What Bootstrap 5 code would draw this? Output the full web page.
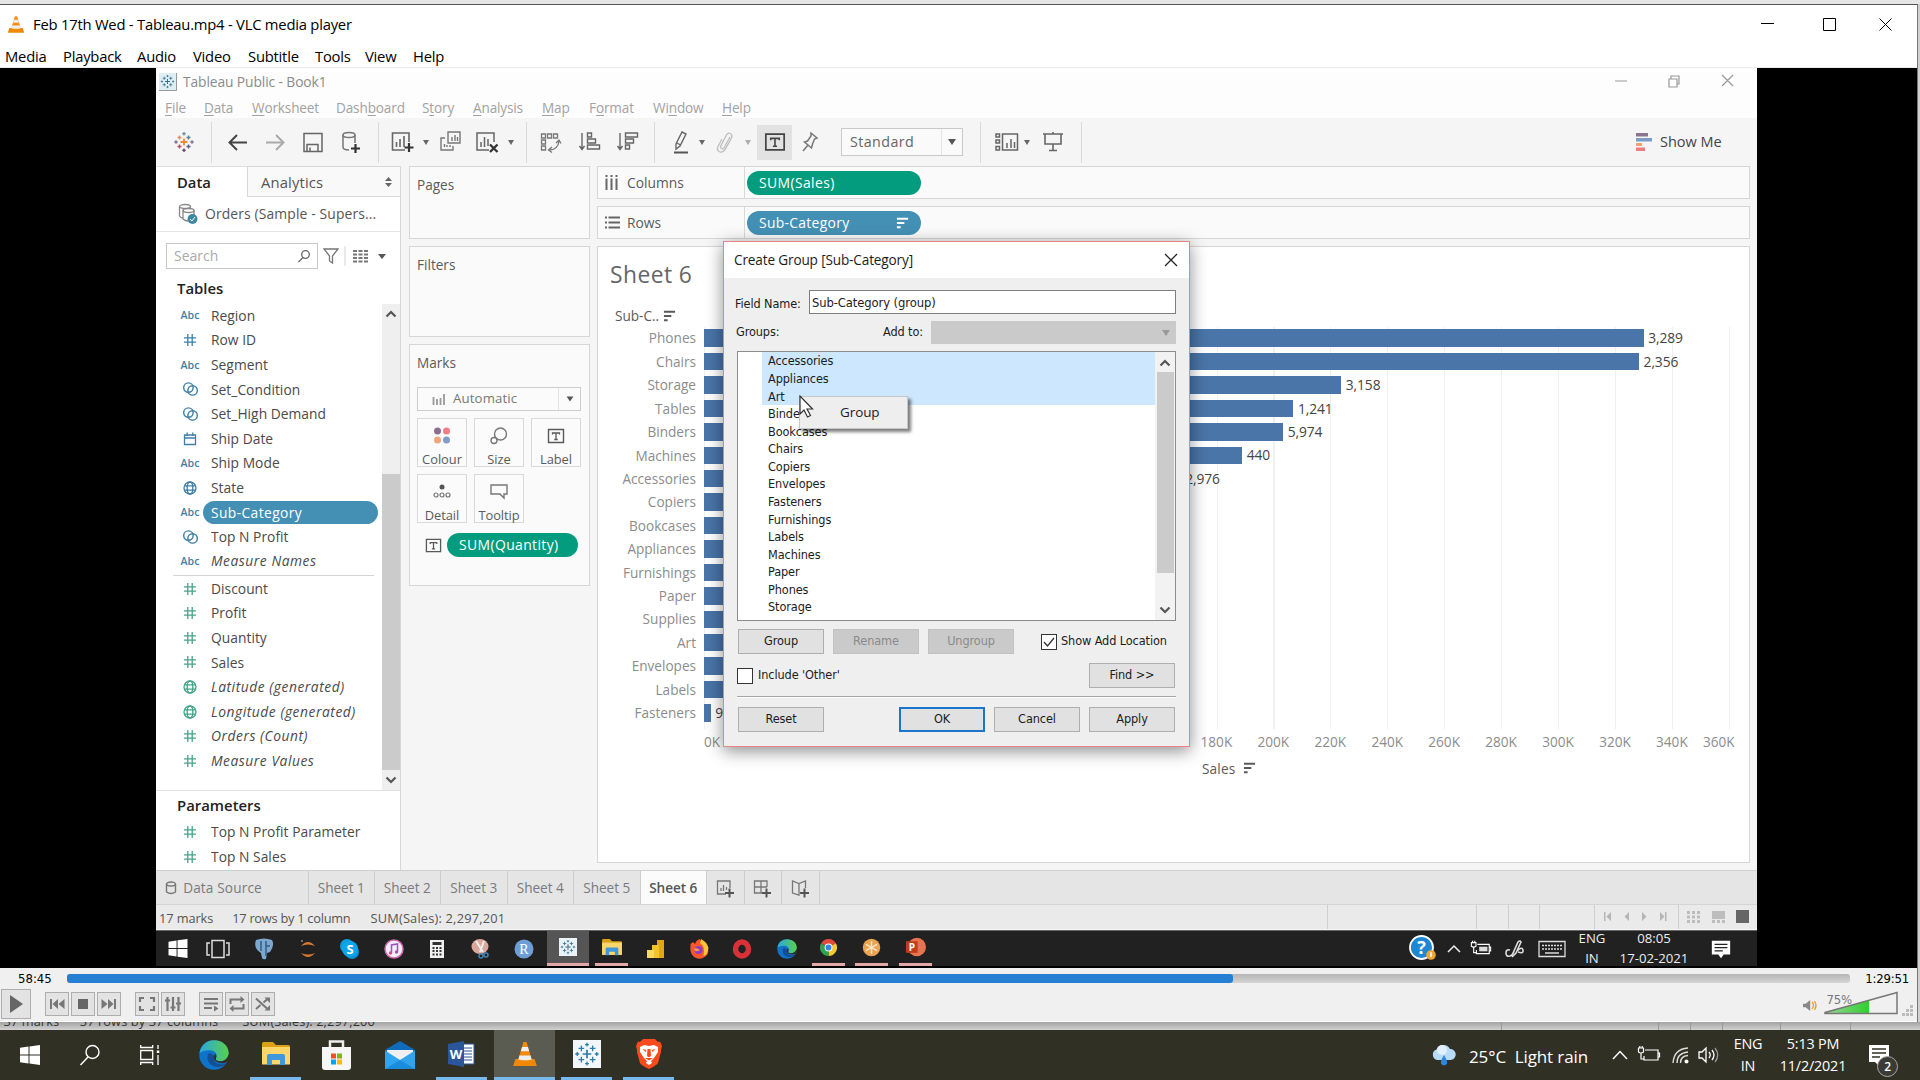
<!DOCTYPE html>
<html lang="en">
<head>
<meta charset="utf-8">
<title>Feb 17th Wed - Tableau.mp4 - VLC media player</title>
<link href="https://cdn.jsdelivr.net/npm/bootstrap@5.3.0/dist/css/bootstrap.min.css" rel="stylesheet">
<style>
html,body{width:1920px;height:1080px;overflow:hidden}
body{font-family:"Open Sans","Noto Sans",sans-serif;font-size:14px;line-height:1;background:#d0d0d0;color:#000}
svg{display:block;flex:none}
.i24{width:24px;height:24px}
.strip-top{height:4px;background:#e6e6e6}
.vlc{width:1918px;height:1018px;background:#fff;border-top:1px solid #555;border-right:1px solid #777}
.vlc-title{height:37px;font-size:14.8px;letter-spacing:-.23px;padding:2px 0 0 7px}
.vlc-menu{height:25px;font-size:14.8px;letter-spacing:-.23px;display:grid;align-items:center;grid-template-columns:58px 74px 56px 55px 67px 50px 48px auto;padding:3px 0 0 5px}
.wbtns{width:180px;display:grid;grid-template-columns:58px 60px auto}
.stage{height:901px;background:#000;border-top:1px solid #ececec;padding-left:156px}
.tab-app{width:1601px;height:862px;background:#f5f5f5;color:#555;position:relative}
.tb-title{height:28px;background:#fdfdfd;color:#8b8b8b;font-size:13.8px;letter-spacing:-.1px;padding-left:3px}
.tb-menu{height:22px;background:#fdfdfd;color:#a2a2a2;font-size:13.6px;letter-spacing:-.15px;display:grid;align-items:center;padding:1px 0 0 9px;grid-template-columns:39px 48px 84px 86px 51px 69px 47px 64px 69px auto}
.tb-menu u{text-underline-offset:2px}
.tools{height:48px;display:grid;align-items:center;padding-left:16px;grid-template-columns:39px 15px 37px 38px 38px 39px 13px 31px 17px 37px 31px 19px 13px 39px 38px 38px 15px 29px 15px 31px 13px 40px 44px 139px 15px 28px 18px 40px 555px auto}
.vsep{width:1px;height:41px;background:#d9d9d9}
.caret{width:0;height:0;border:3px solid transparent;border-top:5px solid #666;border-bottom:0;margin-left:1px}
.caret-lg{width:0;height:0;border:4.5px solid transparent;border-top:6px solid #555;border-bottom:0}
.tbox{width:35px;height:35px;background:#e2e2e2}
.combo{width:122px;height:28px;background:#fafafa;border:1px solid #c9c9c9;font-size:14.3px;letter-spacing:.4px;color:#666;padding-left:8px}
.combo .drop{width:21px;height:26px;border-left:1px solid #e4e4e4}
.work{height:704px}
.side{width:245px;background:#fff;border-right:1px solid #d8d8d8;font-size:14px}
.side-tabs{height:31px}
.side-tabs .t-data{width:91px;padding:1px 0 0 21px;font-weight:600;color:#222;font-size:14.8px;border-top:1px solid #ddd}
.side-tabs .t-an{padding:1px 0 0 13px;background:#f9f9f9;border:1px solid #d8d8d8;border-right:0;font-size:14.8px;letter-spacing:.15px}
.ds{height:35px;border-bottom:1px solid #e4e4e4;padding-left:21px;font-size:13.9px;letter-spacing:.12px}
.searchrow{height:46px;padding:11px 0 9px 10px}
.searchbox{width:152px;border:1px solid #c8c8c8;color:#aaa;padding:0 7px 0 7px}
.hd{font-weight:600;color:#222;font-size:14.9px;padding-left:21px}
.fld{height:24.55px;display:flex;align-items:center;font-size:13.8px;color:#4a4a4a;letter-spacing:.03px}
.fld .ic{width:34px;margin-left:17px;display:flex;justify-content:center;color:#3f7fa5;font-size:10.6px;font-weight:600}
.fld .tx{padding:0 5px 0 4px;white-space:nowrap}
.fld.green .ic{color:#46a487}
.fld.it .tx{font-style:italic;letter-spacing:.55px}
.fld.sel .tx{background:#4490b5;color:#fff;height:23px;line-height:23px;border-radius:12px;width:175px;margin-left:-4px;padding-left:8px;letter-spacing:.4px}
.sbar{width:18px;background:#efefef}
.sbar .thumb{background:#cbcbcb}
.pane{background:#fafafa;border:1px solid #d6d6d6;color:#5a5a5a}
.mid{width:181px;margin-left:8px;gap:7px;font-size:13.6px}
.mid .pane{padding:11px 8px 11px 7px}
.mbox{border:1px solid #d9d9d9;width:50px;height:49px;font-size:12.9px;background:#fbfbfb;padding-top:4px;letter-spacing:-.05px}
.mcombo{height:24px;border:1px solid #cdcdcd;font-size:13.2px;letter-spacing:.15px;color:#777;background:#fbfbfb;padding-left:14px}
.pill{border-radius:12px;height:24px;color:#fff;font-size:13.9px;letter-spacing:.4px;padding:0 12px;background:#039c7e}
.pill.blue{background:#4490b5;letter-spacing:.3px}
.main{width:1153px;margin-left:7px;gap:7px}
.shelf{height:33px;font-size:13.8px}
.shelf .lab{width:147px;border-right:1px solid #d8d8d8;padding-left:7px;gap:9px}
.shelf .pill{width:174px;margin-left:2px}
.sheet{height:617px;background:#fff}
.plotwrap{width:1145px;height:402px;margin-top:1.5px}
.labs{width:98px;text-align:right;font-size:13.6px;color:#8c8c8c}
.labs div,.bars>div{height:23.43px;display:flex;align-items:center;justify-content:flex-end}
.bars{flex:1;margin-left:8px;height:402px;background:repeating-linear-gradient(90deg,#f0f0f0 0 1px,transparent 1px 56.95px)}
.bars>div{justify-content:flex-start;font-size:13.8px;color:#444;letter-spacing:-.1px}
.bars i{display:block;height:17.5px;background:#4975a8;margin-right:4.5px;flex:none}
.axis{font-size:13.6px;color:#8c8c8c;margin-left:106px;height:24px;align-items:center;letter-spacing:0;padding-top:3px}
.axis span{width:56.95px;flex:none;text-align:center}
.dlg{position:absolute;left:567px;top:173px;width:467px;height:506px;background:#efefef;border:1.5px solid #e88484;box-shadow:0 4px 16px rgba(0,0,0,.45);color:#1c1c1c;font-family:"DejaVu Sans Condensed","DejaVu Sans",sans-serif;font-stretch:condensed;font-size:12.6px;letter-spacing:-.1px}
.dlg-h{height:36px;background:#fff;font-family:"Open Sans",sans-serif;font-stretch:normal;font-size:13.6px;padding:0 11px 0 10px;letter-spacing:-.15px}
.dlg-b{padding:12px 13px 0 13px}
.inp{width:367px;height:24px;border:1px solid #7f7f7f;background:#fff;padding-left:2px}
.dcombo{width:245px;height:23px;background:#cacaca;padding-right:6px}
.lst{height:270px;border:1px solid #8c8c8c;background:#fff;margin-top:7px}
.lst .rw{height:17.57px;padding:2px 0 0 6px;display:flex;align-items:center;margin-left:24px}
.lst .rw.on{background:#cde7ff}
.dbtn{width:86px;height:25px;background:#e1e1e1;border:1px solid #aeaeae}
.dbtn.off{background:#cacaca;border-color:#c2c2c2;color:#8b8b8b}
.dbtn.ok{border:2px solid #1d75c9}
.cbx{width:16px;height:16px;border:1px solid #333;background:#fff}
.ctx{position:absolute;left:75px;top:154px;width:109px;height:33px;background:#eee;border:1px solid #c6c6c6;box-shadow:3px 3px 3px rgba(0,0,0,.5);padding-left:40px;font-family:"Open Sans",sans-serif;font-stretch:normal;font-size:13.5px}
.cur{position:absolute;left:75px;top:153px}
.stabs{height:35px;background:#e5e5e5;border-top:1px solid #cfcfcf;border-bottom:1px solid #d4d4d4;font-size:13.6px;color:#7a7a7a}
.stabs>div{border-right:1px solid #cdcdcd;display:flex;align-items:center;justify-content:center;height:33px;letter-spacing:-.05px;padding-top:1px}
.w67{width:66.5px}.w37{width:37.5px}
.stat{height:24px;background:#eaeaea;font-size:12.8px;color:#555;padding-left:3px;letter-spacing:-.1px}
.stat .txt{padding-top:2px}
.stat .cell{border-left:1px solid #cfcfcf;height:24px}
.mini{width:1601px;height:36px;background:#212121;color:#eee;display:grid;align-items:center;padding-left:8px;grid-template-columns:42px 46px 44px 42px 44px 43px 44px 43px 35px 48px 48px 44px 43px 43px 39px 43px 44px 510px 33px 28px 32px 36px 37px 42px 89px auto;font-size:13.2px;border-top:1px solid #666}
.mini .run{width:33px;height:35px;border-bottom:3px solid #e3a8a8;display:flex;align-items:center;justify-content:center}
.mini .act{width:42px;background:#555}
.two{display:flex;flex-direction:column;align-items:center;gap:6px;white-space:nowrap}
.ctl{height:53px;background:#f0f0f0;font-family:"DejaVu Sans Condensed",sans-serif;font-stretch:condensed;font-size:13px;letter-spacing:-.2px}
.seek{height:9px;width:1783px;flex:none;border-radius:3px;background:linear-gradient(#b5b5b5,#d5d5d5)}
.seek i{display:block;height:9px;border-radius:3px;background:#2580d3}
.vb{width:24px;height:24px;border:1px solid #adadad;background:#e3e3e3;margin-right:2px}
.vb.big{width:30px;height:30px;margin-right:14px}
.under{height:8px;background:linear-gradient(#a2a2a2,#d2d2d2);overflow:hidden;padding-right:12px}
.under .cut{font-size:12.8px;color:#333;line-height:8px;margin-top:-5px;white-space:pre;letter-spacing:.1px}
.under i{height:8px;border-left:1px solid #999}
.task{height:50px;background:#303025;color:#fff;display:grid;align-items:center;padding-left:4px;grid-template-columns:60px 60px 64px 62px 61px 63px 62px 58px 67px 62px 808px 38px 139px 29px 32px 28px 33px 43px 89px auto;font-size:14.4px;letter-spacing:-.2px}
.app{width:51px;height:50px;display:flex;align-items:center;justify-content:center}
.app.r{border-bottom:3px solid #76b9ed}
.app.a{width:61px;background:#5a5b51}
.wx{font-size:17px;white-space:pre;letter-spacing:-.1px;padding-top:2px}
.note{position:relative}
.note b{position:absolute;left:15px;top:13px;width:21px;height:21px;border-radius:50%;background:#3b3b35;border:1px solid #aaa;font-size:12px;font-weight:600;display:flex;align-items:center;justify-content:center}
</style>
<script src="https://cdn.jsdelivr.net/npm/bootstrap@5.3.0/dist/js/bootstrap.bundle.min.js"></script>
</head>
<body class="d-flex flex-column m-0">
<svg width="0" height="0" class="position-absolute">
<defs>
<symbol id="cone" viewBox="0 0 24 24"><path d="M1 23l2.2-6.500h17.600L23 23z" fill="#f08705"/><path d="M10.600 1h2.800L18.500 18c-1 2-12 2-13 0z" fill="#f58a0c"/><path d="M9.300 5.500h5.400l1.200 4H8.100zM6.900 13.300h10.200l1 3.700c-1 1-11.200 1-12.200 0z" fill="#eee"/></symbol>
<symbol id="tabl" viewBox="0 0 24 24"><g fill="none" stroke="currentColor" stroke-width="1.200"><path d="M12 8v8M8 12h8" stroke-width="1.600"/><path d="M12 1.500v3.600M10.200 3.300h3.600M12 19v3.600M10.200 20.800h3.600M3 10.200v3.600M1.200 12h3.600M21 10.200v3.600M19.200 12h3.600M6.800 4.200v5.200M4.200 6.800h5.200M17.200 4.200v5.200M14.600 6.800h5.200M6.800 14.600v5.200M4.200 17.200h5.200M17.200 14.600v5.200M14.600 17.200h5.200"/></g></symbol>
<symbol id="sort" viewBox="0 0 14 12"><path d="M1 1.500h12M1 6h8M1 10.500h4" stroke="currentColor" stroke-width="2.200"/></symbol>
<symbol id="hash" viewBox="0 0 14 14"><path d="M4.800 1v12M9.200 1v12M1 4.800h12M1 9.200h12" stroke="currentColor" stroke-width="1.300"/></symbol>
<symbol id="sets" viewBox="0 0 18 16"><g fill="none" stroke="currentColor" stroke-width="1.500"><circle cx="6.800" cy="6.500" r="5"/><circle cx="11.200" cy="9.500" r="5"/></g></symbol>
<symbol id="globe" viewBox="0 0 14 14"><g fill="none" stroke="currentColor" stroke-width="1.300"><circle cx="7" cy="7" r="6"/><ellipse cx="7" cy="7" rx="2.800" ry="6"/><path d="M1.500 4.800h11M1.500 9.200h11"/></g></symbol>
<symbol id="cal" viewBox="0 0 14 14"><path d="M1.500 3h11v9.500h-11zM1.500 6h11M4.200 .5V4M9.800 .5V4" fill="none" stroke="currentColor" stroke-width="1.300"/></symbol>
<symbol id="tlab" viewBox="0 0 18 18"><path d="M1.500 2.500h15v13h-15z" fill="none" stroke="currentColor" stroke-width="1.400"/><path d="M5.500 7.500V6h7v1.500M9 6v6.500M7.300 12.500h3.400" fill="none" stroke="currentColor" stroke-width="1.300"/></symbol>
<symbol id="win" viewBox="0 0 20 20"><path d="M0 2.800l8.500-1.200v7.900H0zM9.500 1.400L20 0v9.500H9.500zM0 10.500h8.500v7.900L0 17.200zM9.500 10.500H20V20L9.500 18.600z" fill="#fff"/></symbol>
<linearGradient id="eg" x2="1" y2="0"><stop stop-color="#2aa6e2"/><stop offset="1" stop-color="#5ad04c"/></linearGradient>
<symbol id="edge" viewBox="0 0 30 30"><circle cx="15" cy="15" r="14.700" fill="#0f73ca"/><path d="M.5 13C2 4.500 8 .3 15 .3c9 0 14.700 6 14.700 13 0 5-4 8-8.700 8-3 0-4.700-1.300-4-3 2-4-1-8-6-8C6 10 2 12 .5 13z" fill="url(#eg)"/><path d="M10 13c-4 5 0 14 9 14 3.500 0 6-1.200 8-3.200-3 1-12 1.500-12-5.500 0-2.500 0-4-5-5.300z" fill="#124f94"/><path d="M14.800 15.500c-1 6 5 8.500 11 7.500l4-2 1-7-1.500 1c-1 4-4.500 6.300-8.300 6.300-3 0-4.700-1.300-4-3 .5-1.300.5-3-.2-4.300z" fill="#303025"/></symbol>
<symbol id="folder" viewBox="0 0 28 24"><path d="M0 1.500Q0 0 1.500 0H11l3 3h12.500Q28 3 28 4.500V22H0z" fill="#dba013"/><path d="M0 5h28v17.500H0z" fill="#fbd66b"/><path d="M5 23v-9q0-2 2-2h14q2 0 2 2v9h-5v-5h-8v5z" fill="#3f98dc"/></symbol>
<symbol id="up" viewBox="0 0 14 14"><path d="M2.500 9.500L7 5l4.500 4.500" fill="none" stroke="currentColor" stroke-width="2.200"/></symbol>
<symbol id="down" viewBox="0 0 14 14"><path d="M2.500 4.500L7 9l4.500-4.500" fill="none" stroke="currentColor" stroke-width="2.200"/></symbol>
<symbol id="bat" viewBox="0 0 24 24"><path d="M8 7h13v10H7v-4M21 10h1.500v4H21M1.500 5v4q2.500 2 5 0V5zM4 10v6h3M2.800 5V3M5.200 5V3" fill="none" stroke="#fff" stroke-width="1.200"/></symbol>
</defs>
</svg>

<div class="strip-top"></div>
<div class="vlc">
  <div class="vlc-title d-flex align-items-center">
    <svg width="18" height="21"><use href="#cone"/></svg><span class="ms-1 ps-1">Feb 17th Wed - Tableau.mp4 - VLC media player</span>
    <div class="wbtns ms-auto align-items-center me-0">
      <svg width="13" height="13" class="ms-4 overflow-visible"><path d="M0 5.500h13" stroke="#000"/></svg>
      <svg width="13" height="13" class="ms-4 ps-1 overflow-visible"><path d="M.5 .5h12v12h-12z" fill="none" stroke="#000"/></svg>
      <svg width="13" height="13" class="ms-4 overflow-visible"><path d="M.5 .5l12 12M12.500 .5l-12 12" stroke="#000"/></svg>
    </div>
  </div>
  <div class="vlc-menu"><span>Media</span><span>Playback</span><span>Audio</span><span>Video</span><span>Subtitle</span><span>Tools</span><span>View</span><span>Help</span></div>

  <div class="stage">
    <div class="tab-app d-flex flex-column">
      <div class="tb-title d-flex align-items-center">
        <svg width="18" height="18" style="color:#2f6f8f"><path d="M0 0h18v18H0z" fill="#dfeef3"/><use href="#tabl" x="1" y="1" width="15" height="15"/><path d="M17.500 0v17.500H0" stroke="#999" fill="none"/></svg>
        <span style="margin-left:6px">Tableau Public - Book1</span>
        <div class="ms-auto d-flex align-items-center pe-1 me-1">
          <svg width="148" height="18"><path d="M14 8h12M68 6h8v8h-8zM70 6V3h8v8h-2M121 2l11 11M132 2l-11 11" fill="none" stroke="#999" stroke-width="1.200"/></svg>
        </div>
      </div>
      <div class="tb-menu"><span><u>F</u>ile</span><span><u>D</u>ata</span><span><u>W</u>orksheet</span><span>Dash<u>b</u>oard</span><span>S<u>t</u>ory</span><span><u>A</u>nalysis</span><span><u>M</u>ap</span><span>F<u>o</u>rmat</span><span>Wi<u>n</u>dow</span><span><u>H</u>elp</span></div>

      <div class="tools">
        <svg class="i24" viewBox="0 0 24 24"><g fill="none" stroke-width="1.400"><path d="M12 8.500v7M8.500 12h7" stroke="#e88b3c" stroke-width="1.800"/><path d="M12 2v3.500M10.300 3.700h3.400" stroke="#6b93a8"/><path d="M12 18.500V22M10.300 20.300h3.400" stroke="#6b4a70"/><path d="M4 10.300v3.400M2.300 12h3.400M20 10.300v3.400M18.300 12h3.400" stroke="#79719b"/><path d="M7.500 5.500v4M5.500 7.500h4" stroke="#e08b60"/><path d="M16.500 5.500v4M14.500 7.500h4" stroke="#56808f"/><path d="M7.500 14.500v4M5.500 16.500h4" stroke="#b64c66"/><path d="M16.500 14.500v4M14.500 16.500h4" stroke="#5d5a90"/></g></svg>
        <div class="vsep"></div>
        <svg class="i24" viewBox="0 0 24 24"><path d="M21 12.500H4M11 5L3.500 12.500 11 20" fill="none" stroke="#444" stroke-width="2"/></svg>
        <svg class="i24" viewBox="0 0 24 24"><path d="M3 12.500h17M13 5l7.500 7.500L13 20" fill="none" stroke="#aaa" stroke-width="2"/></svg>
        <svg class="i24" viewBox="0 0 24 24"><path d="M3 3.500h18v18H3zM6 21.500v-7h11v7M9 17.500v4" fill="none" stroke="#666" stroke-width="1.500"/></svg>
        <svg class="i24" viewBox="0 0 24 24"><path d="M4 5v12q0 3 6 3M16 5v8" fill="none" stroke="#777" stroke-width="1.500"/><ellipse cx="10" cy="5" rx="6" ry="2.500" fill="none" stroke="#777" stroke-width="1.500"/><path d="M16.500 14v9M12 18.500h9" stroke="#333" stroke-width="2.200"/></svg>
        <div class="vsep"></div>
        <svg class="i24" viewBox="0 0 24 24"><path d="M18 12V3H1.500v17H14M5.500 12v5M9 9v8M13 6v11" fill="none" stroke="#666" stroke-width="1.600"/><path d="M18 13v9M13.500 17.500h9" stroke="#333" stroke-width="2.200"/></svg>
        <div class="caret"></div>
        <svg class="i24" viewBox="0 0 24 24"><path d="M9 2h12v11H9zM6 8H2v12h12v-4M13 7v4M16 5v6M18.500 7v4M5.500 14v3M8 15v2M11 15v2" fill="none" stroke="#777" stroke-width="1.400"/></svg>
        <svg class="i24" viewBox="0 0 24 24"><path d="M18 12V3H1v17h12M5 12v5M8.500 7v10M12 9v7" fill="none" stroke="#666" stroke-width="1.500"/><path d="M14 14.500l7.500 7.500M21.500 14.500L14 22" stroke="#333" stroke-width="2.300"/></svg>
        <div class="caret"></div>
        <div class="vsep"></div>
        <svg class="i24" viewBox="0 0 24 24"><path d="M2.500 4h4v4h-4zM8.500 4h4v4h-4zM14.500 4h4v4h-4zM2.500 10h4v4h-4zM2.500 16h4v4h-4zM10 20q9 0 10-9M17 13l3-3 2 3.500M13 17l-3.500 3 3.500 2.500" fill="none" stroke="#777" stroke-width="1.300"/></svg>
        <svg class="i24" viewBox="0 0 24 24"><path d="M4 3v16M1.500 16L4 19.500 6.500 16M9.500 3h4v4h-4zM9.500 9h8v4h-8zM9.500 15h12v4h-12z" fill="none" stroke="#666" stroke-width="1.400"/></svg>
        <svg class="i24" viewBox="0 0 24 24"><path d="M4 3v16M1.500 16L4 19.500 6.500 16M9.500 3h12v4h-12zM9.500 9h8v4h-8zM9.500 15h4v4h-4z" fill="none" stroke="#666" stroke-width="1.400"/></svg>
        <div class="vsep"></div>
        <svg class="i24" viewBox="0 0 24 24"><path d="M13 2l4 2-6 12-4 3v-5zM8 13l3.500 2" fill="none" stroke="#666" stroke-width="1.400"/><path d="M5 22.500h14" stroke="#555" stroke-width="2"/></svg>
        <div class="caret"></div>
        <svg class="i24" viewBox="0 0 24 24"><path d="M17 7l-5.500 10q-1.500 2.500-3 1.500t-.5-3L13 6q2-4 4.500-2.500t.5 5.500l-6 10.500q-3 4-6 2t-.5-6L9 9" fill="none" stroke="#c0c0c0" stroke-width="1.400"/></svg>
        <div class="caret opacity-50"></div>
        <div class="tbox d-flex align-items-center justify-content-center"><svg width="22" height="22" style="color:#444"><use href="#tlab"/></svg></div>
        <svg class="i24" viewBox="0 0 24 24"><path d="M14 3l6 5-2.500 1-2 5-1 4-7-6 3-1 3.500-5zM11 15l-5 6" fill="none" stroke="#777" stroke-width="1.500"/></svg>
        <div class="combo d-flex align-items-center"><span class="me-auto">Standard</span><div class="drop d-flex align-items-center justify-content-center"><div class="caret-lg"></div></div></div>
        <div class="vsep"></div>
        <svg class="i24" viewBox="0 0 24 24"><path d="M7.500 4h15v16h-15zM1 4h3.500v3H1zM1 10h3.500v3H1zM1 16.500h3.500v3.500H1zM12 13v5M16 9v9M19.500 12v6" fill="none" stroke="#666" stroke-width="1.500"/></svg>
        <div class="caret"></div>
        <svg class="i24" viewBox="0 0 24 24"><path d="M2 4h20M4 4v10h16V4M12 14v6M8 20.500h8M12 2v2" fill="none" stroke="#666" stroke-width="1.600"/></svg>
        <div class="vsep"></div>
        <div class="d-flex align-items-center"><svg width="16" height="18"><path d="M0 0h12v3.500H0z" fill="#8a7591"/><path d="M0 5h16v3.500H0z" fill="#7e9cc8"/><path d="M0 10h6v3H0z" fill="#eda274"/><path d="M0 14.500h9V18H0z" fill="#ee7c81"/></svg><span class="ms-2" style="color:#444;font-size:14.5px">Show Me</span></div>
      </div>

      <div class="work d-flex">
        <div class="side d-flex flex-column">
          <div class="side-tabs d-flex"><div class="t-data d-flex align-items-center">Data</div><div class="t-an d-flex align-items-center flex-fill"><span>Analytics</span><svg width="7" height="12" class="ms-auto me-2"><path d="M3.500 1L7 5H0zM3.500 11L7 7H0z" fill="#666"/></svg></div></div>
          <div class="ds d-flex align-items-center"><svg width="22" height="22" viewBox="0 0 22 22"><g fill="none" stroke="#888" stroke-width="1.300"><path d="M2.500 4v9q1 2 3 2M6 7v9q2 2 5 2M17 7v5"/><ellipse cx="8" cy="3.500" rx="5.500" ry="2"/><ellipse cx="11.500" cy="7.500" rx="5.500" ry="2"/></g><circle cx="15.500" cy="16" r="5" fill="#3f85a8"/><path d="M13 16l2 2 3-4" stroke="#fff" fill="none"/></svg><span style="margin-left:6px">Orders (Sample - Supers...</span></div>
          <div class="searchrow d-flex align-items-center">
            <div class="searchbox d-flex align-items-center h-100"><span class="me-auto">Search</span><svg width="12" height="13"><circle cx="7.500" cy="4.500" r="3.800" fill="none" stroke="#666" stroke-width="1.300"/><path d="M5 7.500L.5 12" stroke="#666" stroke-width="1.300"/></svg></div>
            <svg width="16" height="16" style="margin-left:5px"><path d="M1 1h14L9.500 8v7l-3-2V8z" fill="none" stroke="#777" stroke-width="1.300"/></svg>
            <svg width="52" height="22" style="margin-left:5px"><path d="M1 1v20" stroke="#d5d5d5"/><path d="M9 6h15M9 9.500h15M9 13h15M9 16.500h15" stroke="#777" stroke-width="2" stroke-dasharray="4 1.500"/><path d="M34 9h8l-4 5z" fill="#555"/></svg>
          </div>
          <div class="hd" style="height:25.5px;line-height:21px">Tables</div>
          <div class="d-flex" style="height:486.5px"><div id="fields" class="flex-fill"></div>
            <div class="sbar d-flex flex-column align-items-center" style="color:#555"><svg width="14" height="20" class="mb-auto"><use href="#up"/></svg><div class="thumb w-100" style="height:296px"></div><svg width="14" height="20"><use href="#down"/></svg></div></div>
          <div class="flex-fill" style="border-top:1px solid #e0e0e0"><div class="hd d-flex align-items-center" style="height:29px">Parameters</div><div id="params"></div></div>
        </div>

        <div class="mid d-flex flex-column">
          <div class="pane" style="height:73px">Pages</div>
          <div class="pane" style="height:91px">Filters</div>
          <div class="pane d-flex flex-column" style="height:242px">
            <div style="height:31px">Marks</div>
            <div class="mcombo d-flex align-items-center"><svg width="13" height="11"><path d="M1.500 11V3M5 11V5M8.500 11V4M12 11V0" stroke="#999" stroke-width="1.800"/></svg><span class="ms-2 me-auto">Automatic</span><div class="d-flex align-items-center justify-content-center" style="width:22px;height:22px;border-left:1px solid #e3e3e3"><div class="caret-lg" style="transform:scale(.85)"></div></div></div>
            <div class="d-flex justify-content-between text-center" style="margin:7px 0">
              <div class="mbox"><svg width="18" height="18" class="mx-auto mb-1 mt-1"><circle cx="4.500" cy="4" r="3.500" fill="#8a6f91"/><circle cx="13.500" cy="4" r="3.500" fill="#ee7f86"/><circle cx="4.500" cy="13" r="3.500" fill="#f2a57b"/><circle cx="13.500" cy="13" r="3.500" fill="#7f9dc6"/></svg><div class="mt-2">Colour</div></div>
              <div class="mbox"><svg width="18" height="18" class="mx-auto mb-1 mt-1"><circle cx="10.500" cy="7" r="6" fill="none" stroke="#777" stroke-width="1.400"/><circle cx="4" cy="13.500" r="3" fill="#fbfbfb" stroke="#777" stroke-width="1.400"/></svg><div class="mt-2">Size</div></div>
              <div class="mbox"><svg width="18" height="18" class="mx-auto mb-1 mt-1"><use href="#tlab"/></svg><div class="mt-2">Label</div></div>
            </div>
            <div class="d-flex text-center" style="gap:7px">
              <div class="mbox"><svg width="18" height="18" class="mx-auto mb-1 mt-1"><circle cx="9" cy="4" r="2.500" fill="#555"/><g fill="none" stroke="#777" stroke-width="1.200"><circle cx="3" cy="12" r="2"/><circle cx="9" cy="12" r="2"/><circle cx="15" cy="12" r="2"/></g></svg><div class="mt-2">Detail</div></div>
              <div class="mbox"><svg width="18" height="18" class="mx-auto mb-1 mt-1"><path d="M1 2h16v9h-3v4l-4-4H1z" fill="none" stroke="#777" stroke-width="1.400"/></svg><div class="mt-2">Tooltip</div></div>
            </div>
            <div class="d-flex align-items-center" style="margin-top:10px"><svg width="17" height="17" class="ms-2"><use href="#tlab"/></svg><div class="pill d-flex align-items-center" style="width:131px;margin-left:5px">SUM(Quantity)</div></div>
          </div>
        </div>

        <div class="main d-flex flex-column">
          <div class="pane shelf d-flex align-items-center"><div class="lab d-flex align-items-center h-100"><svg width="13" height="15"><path d="M1.500 0v2M6.500 0v2M11.500 0v2M1.500 3.500V15M6.500 3.500V15M11.500 3.500V15" stroke="#666" stroke-width="2"/></svg>Columns</div><div class="pill d-flex align-items-center">SUM(Sales)</div></div>
          <div class="pane shelf d-flex align-items-center"><div class="lab d-flex align-items-center h-100"><svg width="15" height="13"><path d="M0 1.500h2M0 6.500h2M0 11.500h2M3.500 1.500H15M3.500 6.500H15M3.500 11.500H15" stroke="#666" stroke-width="2"/></svg><span style="margin-left:-2px">Rows</span></div><div class="pill blue d-flex align-items-center"><span class="me-auto">Sub-Category</span><svg width="13" height="12"><use href="#sort"/></svg></div></div>
          <div class="pane sheet">
            <div style="font-size:22.8px;padding:17px 0 0 12px;height:60px;letter-spacing:.45px;color:#666">Sheet 6</div>
            <div class="d-flex align-items-center" style="font-size:13.6px;height:18px;padding-left:17px">Sub-C.. <svg width="13" height="12" class="ms-1"><use href="#sort"/></svg></div>
            <div class="plotwrap d-flex"><div class="labs" id="labs"></div><div class="bars" id="bars"></div></div>
            <div class="axis d-flex" id="axis"></div>
            <div class="d-flex align-items-center" style="margin:9px 0 0 604px;font-size:13.6px;letter-spacing:.15px">Sales<svg width="13" height="12" class="ms-2"><use href="#sort"/></svg></div>
          </div>
        </div>
      </div>

      <div class="stabs d-flex">
        <div style="width:153px;padding-right:37px"><svg width="12" height="14" class="me-1"><path d="M1.500 3v8q4.500 3 9 0V3" fill="none" stroke="#777" stroke-width="1.400"/><ellipse cx="6" cy="3" rx="4.500" ry="2" fill="none" stroke="#777" stroke-width="1.400"/></svg><span style="padding-left:2px;letter-spacing:.15px">Data Source</span></div>
        <div class="w67" style="width:65.5px">Sheet 1</div><div class="w67">Sheet 2</div><div class="w67">Sheet 3</div><div class="w67">Sheet 4</div><div class="w67">Sheet 5</div>
        <div class="w67" style="background:#fbfbfb;color:#555;font-weight:600;padding:0">Sheet 6</div>
        <div class="w37"><svg width="19" height="19"><path d="M14 9V2H1.500v13H10M5 9v3M7.500 6v6M10.500 8v3" fill="none" stroke="#777" stroke-width="1.300"/><path d="M13.500 9.500v9M9 14h9" stroke="#555" stroke-width="2"/></svg></div>
        <div class="w37"><svg width="19" height="19"><path d="M14 8V2H1.500v12H9M8 2v12M1.500 8H14" fill="none" stroke="#777" stroke-width="1.300"/><path d="M13.500 9.500v9M9 14h9" stroke="#555" stroke-width="2"/></svg></div>
        <div class="w37"><svg width="19" height="19"><path d="M14.500 9V2L8 4.500 1.500 2v12L8 16V4.500" fill="none" stroke="#777" stroke-width="1.300"/><path d="M13.500 9.500v9M9 14h9" stroke="#555" stroke-width="2"/></svg></div>
      </div>
      <div class="stat d-flex align-items-center"><span class="txt">17 marks</span><span class="txt" style="margin-left:19px;letter-spacing:-.25px">17 rows by 1 column</span><span class="txt me-auto" style="margin-left:20px;letter-spacing:.2px">SUM(Sales): 2,297,201</span>
        <div class="cell" style="width:149px"></div><div class="cell" style="width:32px"></div><div class="cell" style="width:31px"></div><div class="cell" style="width:55px"></div>
        <div class="cell d-flex align-items-center justify-content-center pe-1" style="width:84px"><svg width="66" height="10"><g fill="#b5b5b5"><path d="M2 0h1.500v9H2zM9 0v9L4.500 4.500zM27 0v9l-4.500-4.500zM40 0v9l4.500-4.500zM58 0v9l4.500-4.500zM63 0h1.500v9H63z"/></g></svg></div>
        <div class="cell d-flex align-items-center justify-content-center" style="width:79px"><svg width="64" height="14" fill="#bdbdbd"><path d="M1 1h3v3H1zM6 1h3v3H6zM11 1h3v3h-3zM1 5.500h3v3H1zM6 5.500h3v3H6zM11 5.500h3v3h-3zM1 10h3v3H1zM6 10h3v3H6zM11 10h3v3h-3zM26 1h13v8H26zM26 10h3v3h-3zM31 10h3v3h-3zM36 10h3v3h-3z"/><path d="M50 0h13v13H50z" fill="#666"/></svg></div>
      </div>

      <div class="dlg">
        <div class="dlg-h d-flex align-items-center justify-content-between"><span>Create Group [Sub-Category]</span><svg width="14" height="14"><path d="M1 1l12 12M13 1L1 13" stroke="#222" stroke-width="1.300"/></svg></div>
        <div class="dlg-b">
          <div class="d-flex align-items-center justify-content-between" style="margin-left:-2px"><span class="pt-1">Field Name:</span><div class="inp d-flex align-items-center" style="font-size:12.900px;padding-top:2px">Sub-Category (group)</div></div>
          <div class="d-flex align-items-center" style="margin-top:7px"><span class="me-auto" style="margin-left:-1px">Groups:</span><span class="me-2">Add to:</span><div class="dcombo d-flex align-items-center justify-content-end"><div class="caret-lg" style="border-top-color:#999"></div></div></div>
          <div class="lst d-flex"><div class="flex-fill overflow-hidden" id="members"></div><div class="sbar d-flex flex-column align-items-center" style="width:20px;color:#555;background:#f2f2f2"><svg width="14" height="20" viewBox="0 -4 14 20"><use href="#up" width="14" height="14"/></svg><div class="thumb" style="height:201px;width:17px"></div><svg width="14" height="20" class="mt-auto"><use href="#down"/></svg></div></div>
          <div class="d-flex align-items-center" style="margin-top:8px;gap:9px;padding-left:1px"><div class="dbtn d-flex align-items-center justify-content-center">Group</div><div class="dbtn off d-flex align-items-center justify-content-center">Rename</div><div class="dbtn off d-flex align-items-center justify-content-center">Ungroup</div><div class="cbx flex-shrink-0" style="margin-left:18px"><svg width="14" height="14"><path d="M2 7l3.500 4L12 3" fill="none" stroke="#333" stroke-width="1.300"/></svg></div><span style="margin-left:-5px;white-space:nowrap">Show Add Location</span></div>
          <div class="d-flex align-items-center" style="margin-top:9px;padding-right:1px"><div class="cbx"></div><span class="me-auto" style="margin-left:5px">Include 'Other'</span><div class="dbtn d-flex align-items-center justify-content-center">Find &gt;&gt;</div></div>
          <div style="border-top:1px solid #a5a5a5;border-bottom:1px solid #fff;margin:8px 0 9px"></div>
          <div class="d-flex align-items-center" style="gap:9px;padding:0 1px"><div class="dbtn me-auto d-flex align-items-center justify-content-center">Reset</div><div class="dbtn ok d-flex align-items-center justify-content-center">OK</div><div class="dbtn d-flex align-items-center justify-content-center">Cancel</div><div class="dbtn d-flex align-items-center justify-content-center">Apply</div></div>
        </div>
        <div class="ctx d-flex align-items-center">Group</div>
        <svg class="cur" width="16" height="28"><path d="M1 1v18l4-4 3.500 7 3-1.500-3.500-6.500h5.500z" fill="#fff" stroke="#333" stroke-width="1.200"/></svg>
      </div>
    </div>

    <div class="mini">
      <svg width="20" height="19" class="ms-1"><use href="#win"/></svg>
      <svg class="i24" viewBox="0 0 24 24"><path d="M6 3.500h12v17H6zM4 6H1v12h3M20 6h3v12h-3" fill="none" stroke="#ddd" stroke-width="1.500"/></svg>
      <svg class="i24" viewBox="0 0 24 24"><path d="M4 3q8-3 16 0 3 5-2 12l-3 1-1 6q-3 1-4-1l-1-5q-8-5-5-13z" fill="#7da7cc"/><path d="M9 4v10M14 4v15M14 9h4" stroke="#2f5f8a" stroke-width="1.500" fill="none"/></svg>
      <svg class="i24" viewBox="0 0 24 24"><path d="M5 9q7-8 14 0-7-3-14 0zM5 16q7 8 14 0-7 3-14 0z" fill="#d9792f"/><circle cx="6" cy="4" r="1" fill="#888"/></svg>
      <svg class="i24" viewBox="0 0 24 24"><circle cx="9" cy="9" r="7" fill="#0c9fe0"/><circle cx="14" cy="15" r="7" fill="#0f8fd8"/><circle cx="12" cy="12" r="8" fill="#10a5e8"/><text x="12" y="17" text-anchor="middle" font-size="13" font-weight="700" fill="#fff">S</text></svg>
      <svg class="i24" viewBox="0 0 24 24"><circle cx="12" cy="12" r="9" fill="#f2effa" stroke="#d26bb0" stroke-width="1.500"/><path d="M9.500 16V8l6-1v8" fill="none" stroke="#9a54c8" stroke-width="1.500"/><circle cx="8.500" cy="16" r="1.700" fill="#d94b8a"/><circle cx="14.500" cy="15" r="1.700" fill="#9a54c8"/></svg>
      <svg class="i24" viewBox="0 0 24 24"><path d="M5 3h14v18H5z" fill="#f0f0f0"/><path d="M7.500 5h9v3h-9z" fill="#333"/><path d="M7.500 11h9M7.500 14h9M7.500 17.500h9" stroke="#333" stroke-width="1.800" stroke-dasharray="2 1.500"/></svg>
      <svg class="i24" viewBox="0 0 24 24"><ellipse cx="11" cy="9.500" rx="8.500" ry="7.500" fill="#dba79b"/><path d="M7 4l7 11M15 4l-4 11" stroke="#eee" stroke-width="2"/><circle cx="12" cy="19" r="2" fill="none" stroke="#3e86b8" stroke-width="1.500"/><circle cx="17" cy="18" r="2" fill="none" stroke="#3e86b8" stroke-width="1.500"/></svg>
      <svg class="i24" viewBox="0 0 24 24"><circle cx="12" cy="12" r="9.500" fill="#6d9fd6"/><text x="12" y="17" text-anchor="middle" font-family="Liberation Serif" font-size="14" fill="#fff">R</text></svg>
      <div class="run act"><svg width="18" height="18" style="color:#38708c"><path d="M0 0h18v18H0z" fill="#e8f2f7"/><use href="#tabl" x="1" y="1" width="16" height="16"/></svg></div>
      <div class="run"><svg width="20" height="17"><use href="#folder"/></svg></div>
      <svg class="i24" viewBox="0 0 24 24"><path d="M14 3h7v18h-7z" fill="#e2a714"/><path d="M9 8h7v13H9z" fill="#f3c52b"/><path d="M4 13h7v8H4z" fill="#f8da5e"/></svg>
      <svg class="i24" viewBox="0 0 24 24"><path d="M3.500 7l2.500-2 2 2q1-4 5-5 0 3 5 5 5 5 2.500 10.500-4 5-10 4-8.500-2-7-14.500z" fill="#f9572b"/><path d="M14 2q6 3 7.500 9-1 7-5 8 2-10-3.500-13z" fill="#fdc435"/><circle cx="11.500" cy="13" r="4" fill="#8e3bc7"/><path d="M7 11q4 0 6 2-3 2-5 1z" fill="#fd9a3d"/></svg>
      <svg class="i24" viewBox="0 0 24 24"><ellipse cx="12" cy="12" rx="6.500" ry="7" fill="none" stroke="#d93138" stroke-width="5.500"/></svg>
      <svg width="20" height="20" class="ms-1"><use href="#edge"/></svg>
      <div class="run"><svg width="17" height="17" viewBox="0 0 24 24"><path d="M12 12L1.600 6A12 12 0 0 1 22.400 6z" fill="#df4a3c"/><path d="M12 12L22.400 6A12 12 0 0 1 12 24z" fill="#f5c932"/><path d="M12 12v12A12 12 0 0 1 1.600 6z" fill="#32a152"/><circle cx="12" cy="12" r="5.500" fill="#fff"/><circle cx="12" cy="12" r="4.200" fill="#3f7fe8"/></svg></div>
      <div class="run"><svg width="19" height="19" viewBox="0 0 24 24"><circle cx="12" cy="12" r="11" fill="#e9a351"/><path d="M12 4v16M5 8l14 8M19 8L5 16" stroke="#fbe7c8" stroke-width="1.800"/></svg></div>
      <div class="run"><svg width="20" height="20" viewBox="0 0 24 24"><circle cx="13" cy="12" r="11" fill="#e77450"/><path d="M0 5h14v14H0z" fill="#c23c1b"/><text x="7" y="16.500" text-anchor="middle" font-size="12" font-weight="700" fill="#fff">P</text></svg></div>
      <svg width="27" height="27" viewBox="0 0 27 27"><circle cx="12.500" cy="12.500" r="11.500" fill="#1e87d3" stroke="#fff" stroke-width="1.800"/><text x="12.500" y="19" text-anchor="middle" font-size="18" font-weight="700" fill="#fff">?</text><circle cx="22" cy="20" r="4.800" fill="#f0a82e"/><path d="M22 17v5" stroke="#fff" stroke-width="1.500"/></svg>
      <svg class="i24" viewBox="0 0 24 24"><path d="M6 15l6-6 6 6" fill="none" stroke="#eee" stroke-width="1.500"/></svg>
      <svg width="22" height="22" viewBox="0 0 24 24"><use href="#bat"/><path d="M10 9.500h9v5h-9z" fill="#ddd"/></svg>
      <svg class="i24" viewBox="0 0 24 24"><path d="M8 13q-4-1-4 3t4 3q3-1 4-5l4-9q2-2 3 0l-5 11-4 4M15 14q5-5 6-1t-5 2" fill="none" stroke="#ddd" stroke-width="1.600"/></svg>
      <svg width="28" height="18"><path d="M1 1.500h26v15H1z" fill="none" stroke="#ddd" stroke-width="1.300"/><path d="M4 5.500h20M4 9h20" stroke="#ddd" stroke-width="1.600" stroke-dasharray="2 1"/><path d="M7 13h14" stroke="#ddd" stroke-width="1.500"/></svg>
      <div class="two" style="width:34px"><span>ENG</span><span>IN</span></div>
      <div class="two" style="width:74px"><span>08:05</span><span>17-02-2021</span></div>
      <svg width="22" height="22" class="ms-1" viewBox="0 0 24 24"><path d="M2 3h20v15h-7l-3 4-3-4H2z" fill="#fff"/><path d="M5 7h14M5 10.500h14M5 14h9" stroke="#222" stroke-width="1.400"/></svg>
    </div>
  </div>

  <div class="ctl">
    <div class="d-flex align-items-center" style="height:19px;padding:1px 8px 0 18px"><span style="width:49px;letter-spacing:0">58:45</span><div class="seek"><i style="width:65.4%"></i></div><span class="ms-auto">1:29:51</span></div>
    <div class="d-flex align-items-center" style="padding:2px 3px 0 1px;height:32px">
      <div class="vb big d-flex align-items-center justify-content-center"><svg width="15" height="18"><path d="M1 0l13 9-13 9z" fill="#666"/></svg></div>
      <div class="vb"><svg width="22" height="22"><path d="M4 6h2v10H4zM12 6v10l-5.500-5zM18.500 6v10L12.500 11z" fill="#777"/></svg></div>
      <div class="vb"><svg width="22" height="22"><path d="M6 6h10v10H6z" fill="#666"/></svg></div>
      <div class="vb" style="margin-right:14px"><svg width="22" height="22"><path d="M16 6h2v10h-2zM10 6v10l5.500-5zM3.500 6v10L9.500 11z" fill="#777"/></svg></div>
      <div class="vb"><svg width="22" height="22"><path d="M4 9V5h4M14 5h4v4M18 13v4h-4M8 17H4v-4" fill="none" stroke="#777" stroke-width="2.200"/></svg></div>
      <div class="vb" style="margin-right:14px"><svg width="22" height="22"><path d="M5.500 4v14M11 4v14M16.500 4v14M3 7.500h5M8.500 14.500h5M14 10.500h5" stroke="#777" stroke-width="2.200"/></svg></div>
      <div class="vb"><svg width="22" height="22"><path d="M4 6h14M4 10.500h14M4 15h8" stroke="#777" stroke-width="2.200"/><path d="M14 12.500v6l4.500-3z" fill="#777"/></svg></div>
      <div class="vb"><svg width="22" height="22"><path d="M4.500 11V6.500H16M17.500 11v4.500H6" fill="none" stroke="#777" stroke-width="2"/><path d="M14.500 3l4 3.500-4 3.500zM7.500 12l-4 3.500 4 3.500z" fill="#777"/></svg></div>
      <div class="vb"><svg width="22" height="22"><path d="M4 5.500l11 10M4 16l4.500-4M11.500 9.500L15.500 6" stroke="#777" stroke-width="2"/><path d="M12.500 4.500H18V10zM12.500 17.500H18V12z" fill="#777"/></svg></div>
      <svg width="111" height="26" class="ms-auto"><path d="M0 13h3l5-4v12l-5-4H0z" fill="#888" transform="translate(0 1) scale(.9)"/><path d="M9 11q3 3.500 0 7M11.500 10q3 4.500 0 9" fill="none" stroke="#f09a2c" stroke-width="1.300"/><linearGradient id="vg"><stop stop-color="#9fd49a"/><stop offset="1" stop-color="#2fd02f"/></linearGradient><path d="M22 22V21L66 9.500V22z" fill="url(#vg)"/><path d="M22 21.500L94 1.500V22.500H22z" fill="none" stroke="#777" stroke-width="1.500"/><text x="23.500" y="12.500" font-size="13" fill="#777">75%</text><path d="M107 14h3v3h-3zM103 18h3v3h-3zM107 18h3v3h-3zM99 22h3v3h-3zM103 22h3v3h-3zM107 22h3v3h-3z" fill="#bbb"/></svg>
    </div>
  </div>
</div>
<div class="under d-flex"><div class="cut me-auto"> 37 marks      37 rows by 37 columns       SUM(Sales): 2,297,200</div><i style="width:157px"></i><i style="width:32px"></i><i style="width:32px"></i><i style="width:58px"></i><i style="width:70px"></i><i style="width:58px"></i></div>

<div class="task">
  <div class="app"><svg width="20" height="20"><use href="#win"/></svg></div>
  <div class="app"><svg width="22" height="22"><circle cx="13.500" cy="8" r="6.500" fill="none" stroke="#fff" stroke-width="1.400"/><path d="M9 13l-7.500 8" stroke="#fff" stroke-width="1.400"/></svg></div>
  <div class="app"><svg width="20" height="20"><path d="M.7 5.500h12v9H.7zM.7 0v2.500h12V0M.7 20v-2.500h12V20M18 0v4M18 10v10" fill="none" stroke="#fff" stroke-width="1.300"/><path d="M16.800 5.500h2.500V8h-2.500z" fill="#fff"/></svg></div>
  <div class="app"><svg width="30" height="30"><use href="#edge"/></svg></div>
  <div class="app r"><svg width="28" height="24"><use href="#folder"/></svg></div>
  <div class="app"><svg width="29" height="30"><path d="M8 8V1.500h13V8" fill="none" stroke="#eee" stroke-width="2.500"/><path d="M0 7h29v20q0 3-3 3H3q-3 0-3-3z" fill="#f6f6f6"/><path d="M9 13.500h5v5H9z" fill="#f25022"/><path d="M15 13.500h5v5h-5z" fill="#7fba00"/><path d="M9 19.500h5v5H9z" fill="#00a4ef"/><path d="M15 19.500h5v5h-5z" fill="#ffb900"/></svg></div>
  <div class="app"><svg width="30" height="28"><path d="M0 9L15 0l15 9v6H0z" fill="#0f6cbd"/><path d="M2 9h26v10H2z" fill="#f0f0f0"/><path d="M0 9.500L15 19l15-9.500V28H0z" fill="#30a5ee"/><path d="M0 28l15-9 15 9z" fill="#1b8bdc"/></svg></div>
  <div class="app r"><svg width="27" height="26"><path d="M14 3h12v20H14z" fill="#fff" stroke="#2b579a"/><path d="M16 7h8M16 10h8M16 13h8M16 16h8M16 19h8" stroke="#2b579a"/><path d="M0 3l16-3v26L0 23z" fill="#2b579a"/><text x="8" y="18" text-anchor="middle" font-size="13" font-weight="700" fill="#fff">W</text></svg></div>
  <div class="app r a"><svg width="26" height="28"><use href="#cone"/></svg></div>
  <div class="app r"><svg width="28" height="28" style="color:#2f7ca8"><path d="M0 0h28v28H0z" fill="#f3f7fa"/><use href="#tabl" x="1" y="1" width="26" height="26"/></svg></div>
  <div class="app r"><svg width="26" height="30" viewBox="0 0 26 30"><path d="M7 0h12l3 3 2-.5L26 7l-1 4 0 2-3 11q-1 2-9 6-8-4-9-6L1 13v-2L0 7l2-4.500 2 .5z" fill="#fb4a1e"/><path d="M4 8l4-2 5 1 5-1 4 2 0 5-4 6-3 3 1 2-3 2-3-2 1-2-3-3-4-6z" fill="#fff"/><path d="M6.500 10l4 1-1 2zM19.500 10l-4 1 1 2zM11.500 10h3l.5 7-2 1.500-2-1.500zM9 19h8l-4 2.500z" fill="#fb4a1e"/></svg></div>
  <svg width="26" height="22"><path d="M6 16a5.500 5.500 0 0 1-.5-10.500A7.500 7.500 0 0 1 19 5a5.500 5.500 0 0 1 .5 11z" fill="#b8dcf8"/><circle cx="11" cy="6" r="5" fill="#e0f0fd"/><path d="M13 11q4 6.500 3 8.500t-3 2-3-2 3-8.500z" fill="#2f86dc"/></svg>
  <span class="wx">25°C  Light rain</span>
  <svg class="i24" viewBox="0 0 24 24"><path d="M5 16l7-7.500L19 16" fill="none" stroke="#fff" stroke-width="1.400"/></svg>
  <svg class="i24" viewBox="0 0 24 24"><use href="#bat"/></svg>
  <svg class="i24" viewBox="0 0 24 24"><g fill="none" stroke="#ddd" stroke-width="1.400"><path d="M4 20Q5 6 19 5"/><path d="M8 20q0-10 11-11"/><path d="M11.500 20q0-7 7.500-7.500"/></g><circle cx="17.500" cy="18.500" r="2" fill="#fff"/></svg>
  <svg class="i24" viewBox="0 0 24 24"><path d="M2 9h3l4-4v14l-4-4H2z" fill="none" stroke="#fff" stroke-width="1.300"/><path d="M12 9q2.500 3 0 6M15 7q4 5 0 10" fill="none" stroke="#fff" stroke-width="1.300"/><path d="M18 5q5.500 7 0 14" fill="none" stroke="#999" stroke-width="1.300"/></svg>
  <div class="two" style="width:36px;gap:8px"><span>ENG</span><span>IN</span></div>
  <div class="two" style="width:80px;gap:8px"><span>5:13 PM</span><span>11/2/2021</span></div>
  <div class="note d-flex"><svg width="34" height="24" viewBox="0 0 34 24"><path d="M7 2h20v17H17v4l-4-4H7z" fill="#fff"/><path d="M10 6h14M10 10h14M10 14h8" stroke="#303025" stroke-width="1.500"/></svg><b>2</b></div>
</div>

<script>
const $ = id => document.getElementById(id);
const icon = k => k === 'Abc' ? 'Abc' : `<svg width="${k==='sets'?17:14}" height="${k==='sets'?16:14}"><use href="#${k}"/></svg>`;
const row = ([k, t, c]) => `<div class="fld ${c||''}"><span class="ic">${icon(k)}</span><span class="tx">${t}</span></div>`;
$('fields').innerHTML = [['Abc','Region'],['hash','Row ID'],['Abc','Segment'],['sets','Set_Condition'],['sets','Set_High Demand'],['cal','Ship Date'],['Abc','Ship Mode'],['globe','State'],['Abc','Sub-Category','sel'],['sets','Top N Profit'],['Abc','Measure Names','it']].map(row).join('')
 + '<div style="border-top:1px solid #d5d5d5;margin:1px 8px 1px 17px"></div>'
 + [['hash','Discount','green'],['hash','Profit','green'],['hash','Quantity','green'],['hash','Sales','green'],['globe','Latitude (generated)','green it'],['globe','Longitude (generated)','green it'],['hash','Orders (Count)','green it'],['hash','Measure Values','green it']].map(row).join('');
$('params').innerHTML = [['hash','Top N Profit Parameter','green'],['hash','Top N Sales','green']].map(row).join('');
const data = [['Phones',330,'3,289'],['Chairs',328.4,'2,356'],['Storage',223.8,'3,158'],['Tables',207,'1,241'],['Binders',203.4,'5,974'],['Machines',189,'440'],['Accessories',167.4,'2,976'],['Copiers',149.5,''],['Bookcases',114.9,''],['Appliances',107.5,''],['Furnishings',91.7,''],['Paper',78.5,''],['Supplies',46.7,''],['Art',27.1,''],['Envelopes',16.5,''],['Labels',12.5,''],['Fasteners',2.4,'914']];
$('labs').innerHTML = data.map(d => `<div>${d[0]}</div>`).join('');
$('bars').innerHTML = data.map(d => `<div><i style="width:${(d[1]*2.8475).toFixed(1)}px"></i>${d[2]}</div>`).join('');
$('axis').innerHTML = '<span class="text-start">0K</span>' + Array.from({length:18}, (_, i) => {
  const v = (i + 1) * 20;
  const m = i === 0 ? -28.5 : i === 17 ? -10 : 0;
  return `<span style="margin-left:${m}px">${v >= 180 ? v + 'K' : ''}</span>`;
}).join('');
$('members').innerHTML = ['Accessories','Appliances','Art','Binders','Bookcases','Chairs','Copiers','Envelopes','Fasteners','Furnishings','Labels','Machines','Paper','Phones','Storage'].map((t, i) => `<div class="rw ${i<3?'on':''}">${t}</div>`).join('');
</script>
</body>
</html>
